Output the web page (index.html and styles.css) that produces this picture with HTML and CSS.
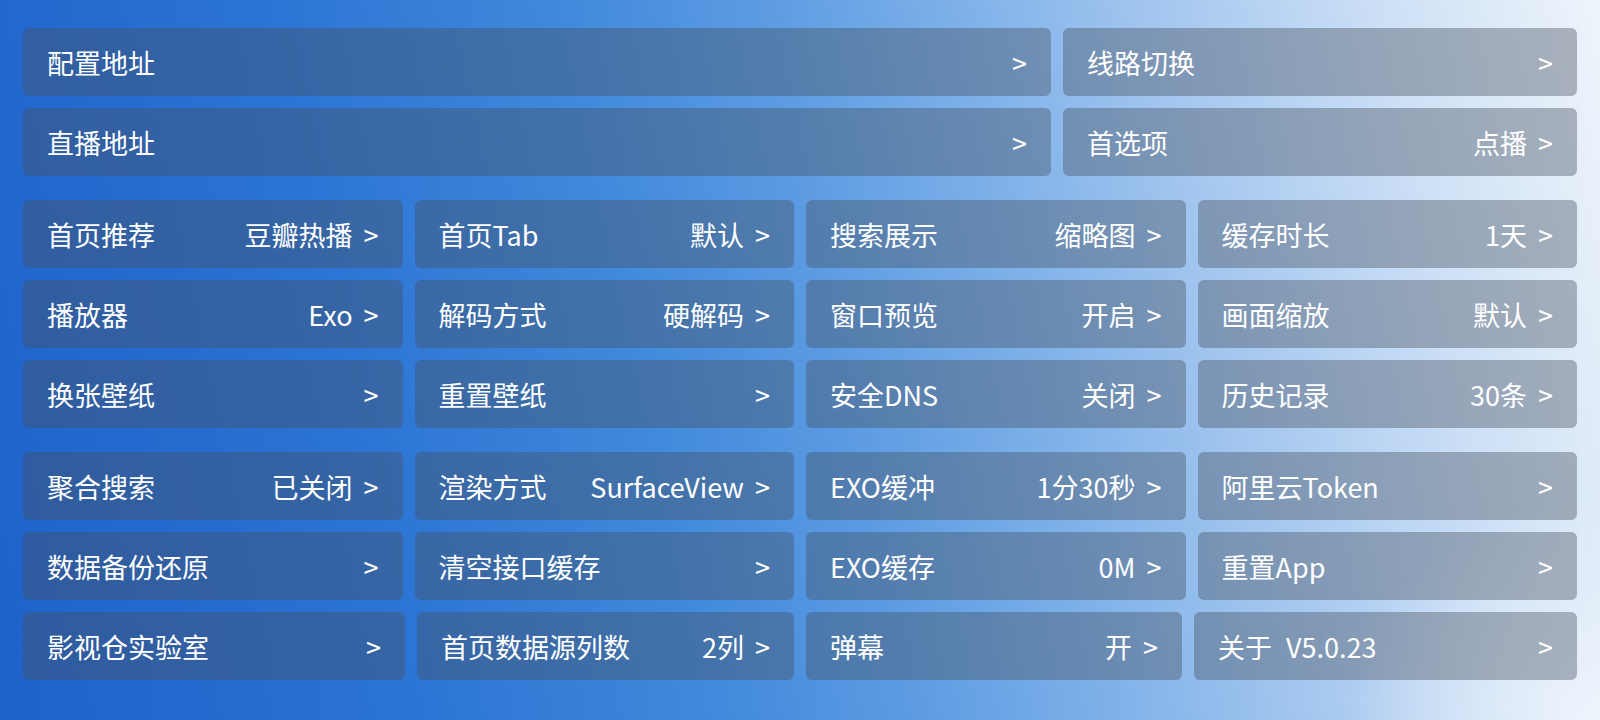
FILE: index.html
```html
<!DOCTYPE html>
<html lang="zh-CN">
<head>
<meta charset="utf-8">
<title>设置</title>
<link rel="stylesheet" href="styles.css">
</head>
<body>
<main class="page">
  <section class="group">
    <div class="row-wide">
      <div class="card"><span class="label">配置地址</span><span class="value"><span class="arrow">&gt;</span></span></div>
      <div class="card"><span class="label">线路切换</span><span class="value"><span class="arrow">&gt;</span></span></div>
    </div>
    <div class="row-wide">
      <div class="card"><span class="label">直播地址</span><span class="value"><span class="arrow">&gt;</span></span></div>
      <div class="card"><span class="label">首选项</span><span class="value">点播<span class="arrow">&gt;</span></span></div>
    </div>
  </section>

  <section class="group grid4">
    <div class="card"><span class="label">首页推荐</span><span class="value">豆瓣热播<span class="arrow">&gt;</span></span></div>
    <div class="card"><span class="label">首页Tab</span><span class="value">默认<span class="arrow">&gt;</span></span></div>
    <div class="card"><span class="label">搜索展示</span><span class="value">缩略图<span class="arrow">&gt;</span></span></div>
    <div class="card"><span class="label">缓存时长</span><span class="value">1天<span class="arrow">&gt;</span></span></div>

    <div class="card"><span class="label">播放器</span><span class="value">Exo<span class="arrow">&gt;</span></span></div>
    <div class="card"><span class="label">解码方式</span><span class="value">硬解码<span class="arrow">&gt;</span></span></div>
    <div class="card"><span class="label">窗口预览</span><span class="value">开启<span class="arrow">&gt;</span></span></div>
    <div class="card"><span class="label">画面缩放</span><span class="value">默认<span class="arrow">&gt;</span></span></div>

    <div class="card"><span class="label">换张壁纸</span><span class="value"><span class="arrow">&gt;</span></span></div>
    <div class="card"><span class="label">重置壁纸</span><span class="value"><span class="arrow">&gt;</span></span></div>
    <div class="card"><span class="label">安全DNS</span><span class="value">关闭<span class="arrow">&gt;</span></span></div>
    <div class="card"><span class="label">历史记录</span><span class="value">30条<span class="arrow">&gt;</span></span></div>
  </section>

  <section class="group">
    <div class="grid4">
      <div class="card"><span class="label">聚合搜索</span><span class="value">已关闭<span class="arrow">&gt;</span></span></div>
      <div class="card"><span class="label">渲染方式</span><span class="value">SurfaceView<span class="arrow">&gt;</span></span></div>
      <div class="card"><span class="label">EXO缓冲</span><span class="value">1分30秒<span class="arrow">&gt;</span></span></div>
      <div class="card"><span class="label">阿里云Token</span><span class="value"><span class="arrow">&gt;</span></span></div>

      <div class="card"><span class="label">数据备份还原</span><span class="value"><span class="arrow">&gt;</span></span></div>
      <div class="card"><span class="label">清空接口缓存</span><span class="value"><span class="arrow">&gt;</span></span></div>
      <div class="card"><span class="label">EXO缓存</span><span class="value">0M<span class="arrow">&gt;</span></span></div>
      <div class="card"><span class="label">重置App</span><span class="value"><span class="arrow">&gt;</span></span></div>
    </div>
    <div class="row-last">
      <div class="card"><span class="label">影视仓实验室</span><span class="value"><span class="arrow">&gt;</span></span></div>
      <div class="card"><span class="label">首页数据源列数</span><span class="value">2列<span class="arrow">&gt;</span></span></div>
      <div class="card"><span class="label">弹幕</span><span class="value">开<span class="arrow">&gt;</span></span></div>
      <div class="card"><span class="label">关于<span class="version">V5.0.23</span></span><span class="value"><span class="arrow">&gt;</span></span></div>
    </div>
  </section>
</main>
</body>
</html>
```

FILE: styles.css
```css
html, body {
  margin: 0;
  padding: 0;
  width: 1600px;
  height: 720px;
  overflow: hidden;
}

body {
  font-family: "Noto Sans CJK SC", "Noto Sans", sans-serif;
  color: #ffffff;
  background:
    radial-gradient(ellipse 260px 220px at 1600px 720px, rgba(244, 248, 253, 0.8), rgba(244, 248, 253, 0) 100%),
    linear-gradient(78deg, #1e62c9 0%, #2a72d3 22%, #3f88db 40%, #5c9be2 52%, #80b2e9 64%, #a5c7ef 75%, #c8ddf5 86%, #e4eef9 96%, #eef4fb 100%);
}

.page {
  padding: 28px 23px 0 23px;
  display: flex;
  flex-direction: column;
  gap: 24px;
}

.group {
  display: flex;
  flex-direction: column;
  gap: 12px;
}

.row-wide {
  display: grid;
  grid-template-columns: 2fr 1fr;
  column-gap: 12px;
}

.grid4 {
  display: grid;
  grid-template-columns: repeat(4, 1fr);
  gap: 12px;
}

.row-last {
  display: grid;
  grid-template-columns: 382fr 377fr 376fr 383fr;
  column-gap: 12px;
}

.card {
  height: 68px;
  box-sizing: border-box;
  border-radius: 6px;
  background: rgba(70, 80, 96, 0.4);
  display: flex;
  align-items: center;
  justify-content: space-between;
  padding: 0 24px 0 24px;
  font-size: 27px;
  line-height: 1;
  white-space: nowrap;
}

.value {
  display: flex;
  align-items: center;
}

.arrow {
  margin-left: 11px;
}

.version {
  margin-left: 14px;
}
```
